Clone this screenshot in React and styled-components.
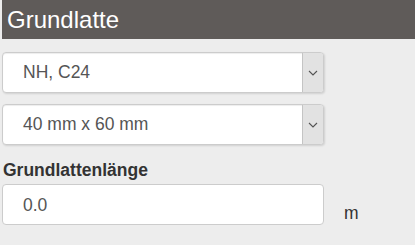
import styled, { createGlobalStyle } from "styled-components";

const GlobalStyle = createGlobalStyle`
  html, body {
    margin: 0;
    background: #ededed;
  }
  body {
    font-family: "Liberation Sans", Arial, sans-serif;
    color: #333;
  }
`;

const Page = styled.div`
  width: 415px;
  height: 245px;
  overflow: hidden;
  background: #ededed;
`;

const Header = styled.div`
  margin-left: 2px;
  height: 39px;
  box-sizing: border-box;
  padding: 5px 0 0 5px;
  background: #5f5b59;
  color: #fff;
  font-size: 24px;
  line-height: 30px;
`;

const Body = styled.div`
  padding: 13px 0 0 2px;
  display: flex;
  flex-direction: column;
`;

const Select = styled.div`
  width: 322px;
  height: 41px;
  box-sizing: border-box;
  display: flex;
  align-items: stretch;
  background: #fff;
  border: 1px solid #ccc;
  border-radius: 4px;
  box-shadow: inset 0 1px 1px rgba(0, 0, 0, 0.075), 1px 1px 2px rgba(0, 0, 0, 0.12);
  margin-bottom: ${(p) => p.$gap}px;
  overflow: hidden;
`;

const Value = styled.div`
  flex: 1;
  padding-left: 20px;
  display: flex;
  align-items: center;
  font-size: 17.5px;
  color: #555;
`;

const Arrow = styled.div`
  width: 20px;
  background: #e2e2e2;
  border-left: 1px solid #c4c4c4;
  display: flex;
  align-items: center;
  justify-content: center;
  svg {
    display: block;
  }
`;

const Label = styled.div`
  margin-top: 15px;
  padding-left: 1px;
  font-size: 17.5px;
  font-weight: 700;
  line-height: 20px;
  color: #333;
`;

const InputRow = styled.div`
  display: flex;
  align-items: flex-end;
  margin-top: 4px;
`;

const Input = styled.div`
  width: 322px;
  height: 41px;
  box-sizing: border-box;
  background: #fff;
  border: 1px solid #ccc;
  border-radius: 4px;
  padding: 9px 0 0 20px;
  font-size: 17.5px;
  line-height: 22px;
  color: #555;
`;

const Unit = styled.span`
  margin-left: 20px;
  margin-bottom: 1px;
  font-size: 17.5px;
  color: #333;
`;

const Chevron = () => (
  <svg width="10" height="6" viewBox="0 0 10 6">
    <path d="M1 1 L5 5 L9 1" fill="none" stroke="#555" strokeWidth="1.1" />
  </svg>
);

const SelectBox = ({ value, gap }) => (
  <Select $gap={gap}>
    <Value>{value}</Value>
    <Arrow>
      <Chevron />
    </Arrow>
  </Select>
);

export default function App() {
  return (
    <Page>
      <GlobalStyle />
      <Header>Grundlatte</Header>
      <Body>
        <SelectBox value="NH, C24" gap={11} />
        <SelectBox value="40 mm x 60 mm" gap={0} />
        <Label>Grundlattenlänge</Label>
        <InputRow>
          <Input>0.0</Input>
          <Unit>m</Unit>
        </InputRow>
      </Body>
    </Page>
  );
}
